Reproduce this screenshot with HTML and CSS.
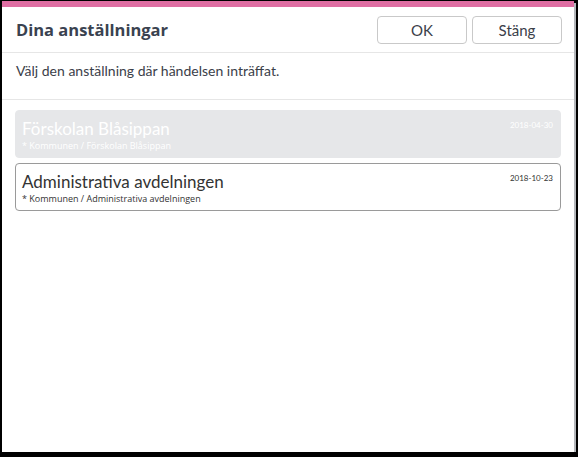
FILE: index.html
```html
<!DOCTYPE html>
<html lang="sv">
<head>
  <meta charset="UTF-8">
  <title>Dina anställningar</title>
  <link rel="stylesheet" href="styles.css">
</head>
<body>

  <div class="dialog">
    <div class="dialog-header">
      <h2>Dina anställningar</h2>
      <div class="actions">
        <button class="btn">OK</button>
        <button class="btn">Stäng</button>
      </div>
    </div>

    <p class="intro">Välj den anställning där händelsen inträffat.</p>

    <div class="employments">
      <div class="employment disabled">
        <div class="employment-name">Förskolan Blåsippan</div>
        <div class="employment-path">* Kommunen / Förskolan Blåsippan</div>
        <span class="employment-date">2018-04-30</span>
      </div>
      <div class="employment">
        <div class="employment-name">Administrativa avdelningen</div>
        <div class="employment-path">* Kommunen / Administrativa avdelningen</div>
        <span class="employment-date">2018-10-23</span>
      </div>
    </div>
  </div>

</body>
</html>
```

FILE: styles.css
```css
body { margin: 0; background: #000; font-family: "Lato", "Liberation Sans", sans-serif; color: #3b4049; }
.dialog { margin: 1px 0 0 2px; width: 572px; height: 445px; background: #fff; border-top: 6px solid #df6ea3; box-shadow: 2px 2px 0 #b4b7bb; }
.dialog-header { display: flex; align-items: center; justify-content: space-between; height: 45px; padding: 0 12px 0 14px; border-bottom: 1px solid #e6e6e6; }
.dialog-header h2 { margin: 0; font-family: "Open Sans", sans-serif; font-size: 16.5px; font-weight: 700; color: #3a4250; }
.actions { display: flex; gap: 5px; padding-top: 1px; }
.btn { width: 90px; height: 28px; background: #fff; border: 1px solid #c9c9c9; border-radius: 4px; font-family: inherit; font-size: 15px; color: #3b4049; }
.intro { margin: 0; height: 47px; padding: 9px 14px 0; box-sizing: border-box; font-size: 14px; border-bottom: 1px solid #e6e6e6; }
.employments { display: flex; flex-direction: column; gap: 5px; padding: 10px 13px 0 13px; }
.employment { position: relative; height: 48px; box-sizing: border-box; padding: 7px 6px 0; border: 1px solid #9a9a9a; border-radius: 4px; color: #333; }
.employment.disabled { background: #e6e7e9; border-color: #e6e7e9; color: #fff; }
.employment-name { font-size: 17px; line-height: 22px; }
.employment-path { font-family: "Open Sans", sans-serif; font-size: 9px; line-height: 11px; }
.employment-date { position: absolute; top: 9px; right: 7px; font-size: 8px; }
```
